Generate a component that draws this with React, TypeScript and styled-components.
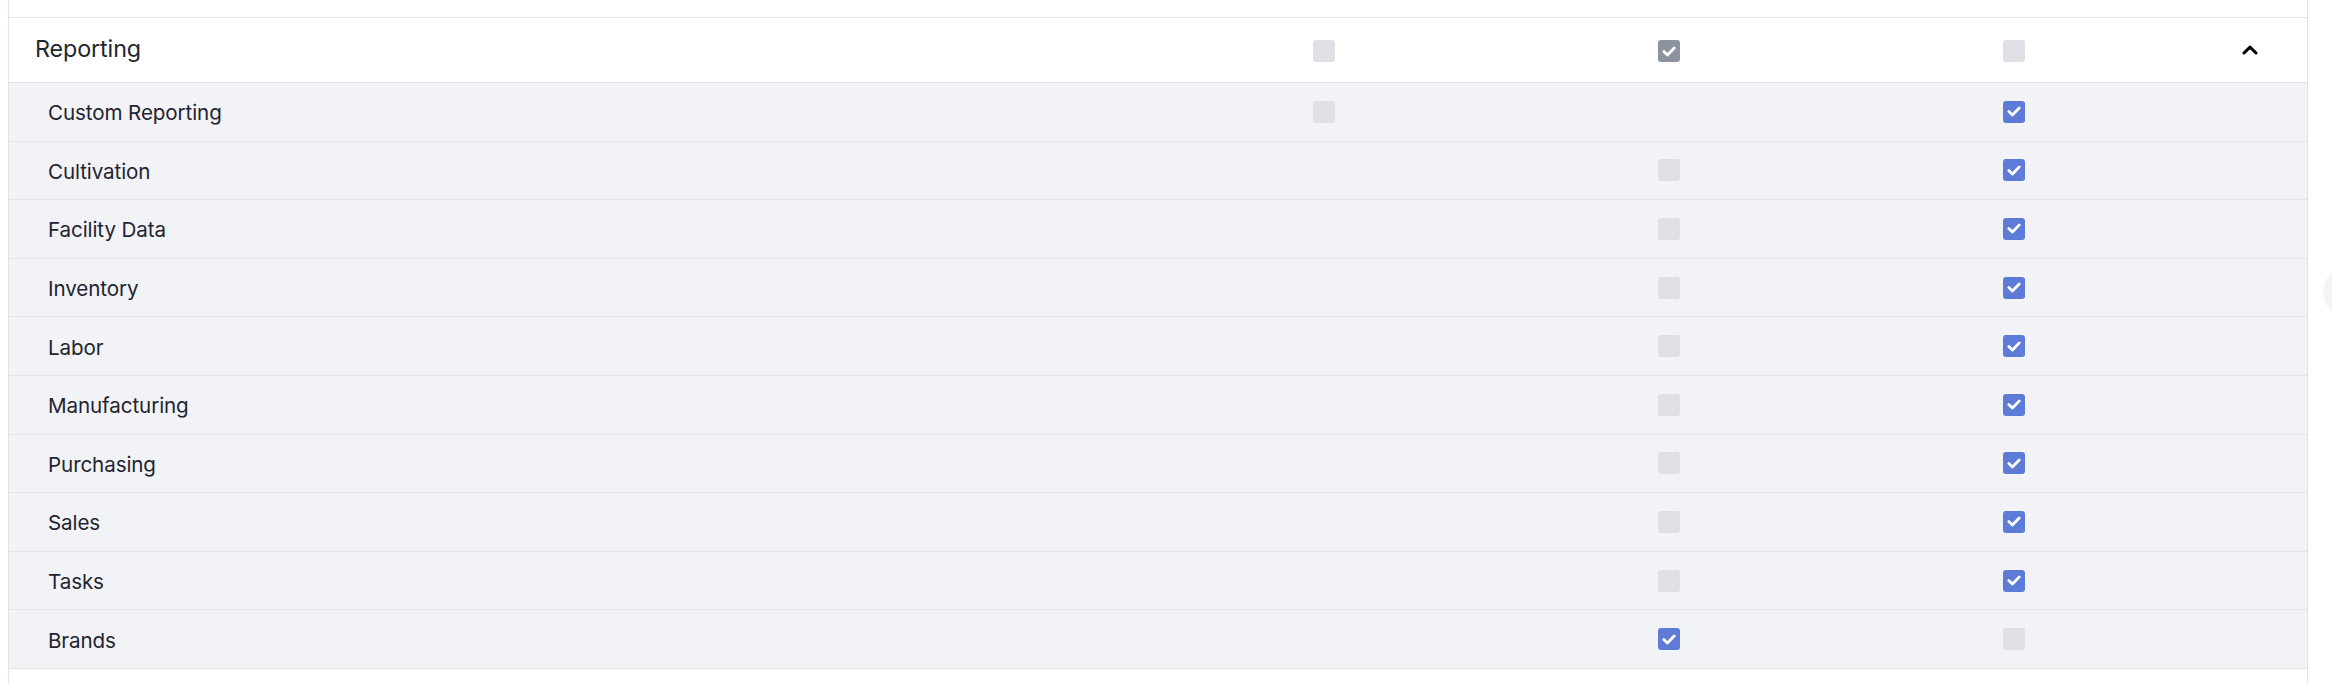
import React from 'react';
import styled, { createGlobalStyle } from 'styled-components';

const GlobalStyle = createGlobalStyle`
  body {
    margin: 0;
    background: #fff;
    font-family: Inter, "Noto Sans", "Liberation Sans", sans-serif;
    color: #1f2430;
  }
`;

type BoxState = 'off' | 'on' | 'locked' | null;

interface Permission {
  name: string;
  cells: [BoxState, BoxState, BoxState];
}

const rows: Permission[] = [
  { name: 'Custom Reporting', cells: ['off', null, 'on'] },
  { name: 'Cultivation', cells: [null, 'off', 'on'] },
  { name: 'Facility Data', cells: [null, 'off', 'on'] },
  { name: 'Inventory', cells: [null, 'off', 'on'] },
  { name: 'Labor', cells: [null, 'off', 'on'] },
  { name: 'Manufacturing', cells: [null, 'off', 'on'] },
  { name: 'Purchasing', cells: [null, 'off', 'on'] },
  { name: 'Sales', cells: [null, 'off', 'on'] },
  { name: 'Tasks', cells: [null, 'off', 'on'] },
  { name: 'Brands', cells: [null, 'on', 'off'] },
];

const Page = styled.div`
  position: relative;
  width: 2332px;
  height: 684px;
  overflow: hidden;
  padding-left: 8px;
  box-sizing: border-box;
`;

const Table = styled.div`
  width: 2300px;
  border-left: 1px solid #e2e4e9;
  border-right: 1px solid #e2e4e9;
  box-sizing: border-box;
  min-height: 684px;
`;

const Stub = styled.div`
  height: 17px;
  border-bottom: 1px solid #e2e4e9;
`;

const Row = styled.div<{ $head?: boolean }>`
  display: grid;
  grid-template-columns: 1142px 345px 345px 345px 1fr;
  align-items: center;
  height: ${(p) => (p.$head ? '65px' : '58.6px')};
  box-sizing: border-box;
  border-bottom: 1px solid #e2e4e9;
  background: ${(p) => (p.$head ? '#ffffff' : '#f2f3f7')};
`;

const Name = styled.div<{ $head?: boolean }>`
  padding-left: ${(p) => (p.$head ? '26px' : '39px')};
  font-size: ${(p) => (p.$head ? '23.3px' : '20.6px')};
  color: ${(p) => (p.$head ? '#22262f' : '#1f2430')};
  letter-spacing: -0.1px;
  margin-top: ${(p) => (p.$head ? '-4px' : '2px')};
`;

const Cell = styled.div<{ $head?: boolean }>`
  display: flex;
  justify-content: center;
  padding-top: ${(p) => (p.$head ? '2px' : '0')};
`;

const Box = styled.div<{ $state: 'off' | 'on' | 'locked' }>`
  width: 22px;
  height: 22px;
  border-radius: 3px;
  display: flex;
  align-items: center;
  justify-content: center;
  background: ${(p) =>
    p.$state === 'on' ? '#5f7bd8' : p.$state === 'locked' ? '#8d929f' : '#dfe0e5'};
`;

const Toggle = styled.div`
  display: flex;
  justify-content: center;
  padding-left: 7px;
`;

const Fab = styled.div`
  position: absolute;
  left: 2323px;
  top: 267px;
  width: 50px;
  height: 50px;
  border-radius: 50%;
  background: #f4f4f5;
`;

const Check = () => (
  <svg width="14" height="11" viewBox="0 0 14 11">
    <path d="M1.8 5.6 L5.4 9 L12.2 2" fill="none" stroke="#fff" strokeWidth="2.8" strokeLinecap="round" strokeLinejoin="round" />
  </svg>
);

const Checkbox = ({ state }: { state: BoxState }) => {
  if (!state) return null;
  return <Box $state={state}>{state !== 'off' && <Check />}</Box>;
};

const Chevron = () => (
  <svg width="16" height="10" viewBox="0 0 16 10">
    <path d="M2 8 L8 2.2 L14 8" fill="none" stroke="#000" strokeWidth="3" strokeLinecap="round" strokeLinejoin="round" />
  </svg>
);

export default function App() {
  return (
    <>
      <GlobalStyle />
      <Page>
        <Table>
          <Stub />
          <Row $head>
            <Name $head>Reporting</Name>
            <Cell $head><Checkbox state="off" /></Cell>
            <Cell $head><Checkbox state="locked" /></Cell>
            <Cell $head><Checkbox state="off" /></Cell>
            <Toggle><Chevron /></Toggle>
          </Row>
          {rows.map((r) => (
            <Row key={r.name}>
              <Name>{r.name}</Name>
              {r.cells.map((c, i) => (
                <Cell key={i}><Checkbox state={c} /></Cell>
              ))}
              <div />
            </Row>
          ))}
        </Table>
        <Fab />
      </Page>
    </>
  );
}
